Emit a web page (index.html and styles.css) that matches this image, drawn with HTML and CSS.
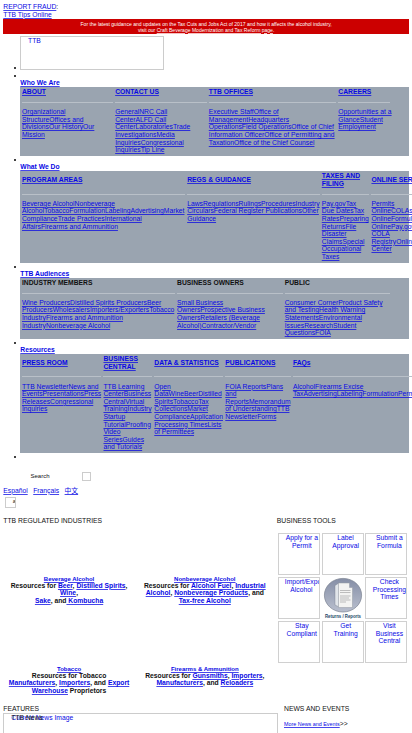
FILE: index.html
```html
<!DOCTYPE html>
<html lang="en">
<head>
<meta charset="utf-8">
<title>TTB</title>
<link rel="stylesheet" href="styles.css">
</head>
<body>
<header class="tips"><a href="#">REPORT FRAUD</a>:<br><a href="#">TTB Tips Online</a></header>
<div class="alert">For the latest guidance and updates on the Tax Cuts and Jobs Act of 2017 and how it affects the alcohol industry,<br>visit our <a href="#">Craft Beverage Modernization and Tax Reform page</a>.</div>
<ul class="nav">
  <li class="logo-item"><a class="logo" href="#">TTB</a></li>
  <li class="who"><a class="label" href="#">Who We Are</a>
    <div class="menu">
      <section><h2><a href="#">ABOUT</a></h2><p><a href="#">Organizational<br>StructureOffices and<br>DivisionsOur HistoryOur<br>Mission</a></p></section>
      <section><h2><a href="#">CONTACT US</a></h2><p><a href="#">GeneralNRC Call<br>CenterALFD Call<br>CenterLaboratoriesTrade<br>InvestigationsMedia<br>InquiriesCongressional<br>InquiriesTip Line</a></p></section>
      <section><h2><a href="#">TTB OFFICES</a></h2><p><a href="#">Executive StaffOffice of<br>ManagementHeadquarters<br>OperationsField OperationsOffice of Chief<br>Information OfficerOffice of Permitting and<br>TaxationOffice of the Chief Counsel</a></p></section>
      <section><h2><a href="#">CAREERS</a></h2><p><a href="#">Opportunities at a<br>GlanceStudent<br>Employment</a></p></section>
    </div></li>
  <li class="what"><a class="label" href="#">What We Do</a>
    <div class="menu tall">
      <section><h2><a href="#">PROGRAM AREAS</a></h2><p><a href="#">Beverage AlcoholNonbeverage<br>AlcoholTobaccoFormulationLabelingAdvertisingMarket<br>ComplianceTrade PracticesInternational<br>AffairsFirearms and Ammunition</a></p></section>
      <section><h2><a href="#">REGS &amp; GUIDANCE</a></h2><p><a href="#">LawsRegulationsRulingsProceduresIndustry<br>CircularsFederal Register PublicationsOther<br>Guidance</a></p></section>
      <section><h2><a href="#">TAXES AND<br>FILING</a></h2><p><a href="#">Pay.govTax<br>Due DatesTax<br>RatesPreparing<br>ReturnsFile<br>Disaster<br>ClaimsSpecial<br>Occupational<br>Taxes</a></p></section>
      <section><h2><a href="#">ONLINE SERVICES</a></h2><p><a href="#">Permits<br>OnlineCOLAs<br>OnlineFormulas<br>OnlinePay.gov<br>COLA<br>RegistryOnline<br>Center</a></p></section>
    </div></li>
  <li class="aud"><a class="label" href="#">TTB Audiences</a>
    <div class="menu">
      <section><h2>INDUSTRY MEMBERS</h2><p><a href="#">Wine ProducersDistilled Spirits ProducersBeer<br>ProducersWholesalersImporters/ExportersTobacco<br>IndustryFirearms and Ammunition<br>IndustryNonbeverage Alcohol</a></p></section>
      <section><h2>BUSINESS OWNERS</h2><p><a href="#">Small Business<br>OwnersProspective Business<br>OwnersRetailers (Beverage<br>Alcohol)Contractor/Vendor</a></p></section>
      <section><h2>PUBLIC</h2><p><a href="#">Consumer CornerProduct Safety<br>and TestingHealth Warning<br>StatementsEnvironmental<br>IssuesResearchStudent<br>QuestionsFOIA</a></p></section>
    </div></li>
  <li class="res"><a class="label" href="#">Resources</a>
    <div class="menu tall">
      <section><h2><a href="#">PRESS ROOM</a></h2><p><a href="#">TTB NewsletterNews and<br>EventsPresentationsPress<br>ReleasesCongressional<br>Inquiries</a></p></section>
      <section><h2><a href="#">BUSINESS<br>CENTRAL</a></h2><p><a href="#">TTB Learning<br>CenterBusiness<br>CentralVirtual<br>TrainingIndustry<br>Startup<br>TutorialProofing<br>Video<br>SeriesGuides<br>and Tutorials</a></p></section>
      <section><h2><a href="#">DATA &amp; STATISTICS</a></h2><p><a href="#">Open<br>DataWineBeerDistilled<br>SpiritsTobaccoTax<br>CollectionsMarket<br>ComplianceApplication<br>Processing TimesLists<br>of Permittees</a></p></section>
      <section><h2><a href="#">PUBLICATIONS</a></h2><p><a href="#">FOIA ReportsPlans<br>and<br>ReportsMemorandum<br>of UnderstandingTTB<br>NewsletterForms</a></p></section>
      <section><h2><a href="#">FAQs</a></h2><p><a href="#">AlcoholFirearms Excise<br>TaxAdvertisingLabelingFormulationPermits</a></p></section>
    </div></li>
  <li class="last"></li>
</ul>
<form class="search"><label>Search</label><span class="go"></span></form>
<div class="langs"><a href="#">Español</a><a href="#">Français</a><a href="#">中文</a></div>
<div class="tiny">a</div>
<main class="main">
  <section class="industries">
    <h3>TTB REGULATED INDUSTRIES</h3>
    <div class="grid">
      <div><a class="t" href="#">Beverage Alcohol</a><br>Resources for <a href="#">Beer</a>, <a href="#">Distilled Spirits</a>,<br><a href="#">Wine</a>,<br><a href="#">Sake</a>, and<a href="#"> Kombucha</a></div>
      <div><a class="t" href="#">Nonbeverage Alcohol</a><br>Resources for <a href="#">Alcohol Fuel</a>, <a href="#">Industrial<br>Alcohol</a>, <a href="#">Nonbeverage Products</a>, and<br><a href="#">Tax-free Alcohol</a></div>
      <div><a class="t" href="#">Tobacco</a><br>Resources for Tobacco<br><a href="#">Manufacturers</a>, <a href="#">Importers</a>, and <a href="#">Export<br>Warehouse</a> Proprietors</div>
      <div><a class="t" href="#">Firearms &amp; Ammunition</a><br>Resources for <a href="#">Gunsmiths</a>, <a href="#">Importers</a>,<br><a href="#">Manufacturers</a>, and <a href="#">Reloaders</a></div>
    </div>
  </section>
  <section class="tools">
    <h3>BUSINESS TOOLS</h3>
    <div class="tiles">
      <a href="#">Apply for a<br>Permit</a><a href="#">Label<br>Approval</a><a href="#">Submit a<br>Formula</a>
      <a class="wide" href="#">Import/Export<br><span>Alcohol</span></a>
      <a class="returns" href="#"><svg viewBox="0 0 42 42" width="42" height="42">
        <defs><linearGradient id="g" x1="0" y1="0" x2="0" y2="1"><stop offset="0" stop-color="#858ea6"/><stop offset="1" stop-color="#b9bfce"/></linearGradient></defs>
        <ellipse cx="21" cy="18.200" rx="18.600" ry="16.800" fill="url(#g)" stroke="#7b8291" stroke-width=".7"/>
        <path d="M13 8.500l4-2.500v24l-4-2z" fill="#e1e5ea" stroke="#737b88" stroke-width=".4"/>
        <path d="M16.500 6h11v4.500h3v20h-14z" fill="#f3f3f2" stroke="#9298a2" stroke-width=".5"/>
        <path d="M18 13.500h10.500M18 15.500h10.500M18 19h10.500M18 21h9M18 23h10.500M18 25h6" stroke="#999" stroke-width=".6"/>
        <text x="21" y="40.500" text-anchor="middle" textLength="36" lengthAdjust="spacingAndGlyphs">Returns / Reports</text></svg></a>
      <a href="#">Check<br>Processing<br>Times</a>
      <a href="#">Stay<br>Compliant</a><a href="#">Get<br>Training</a><a href="#">Visit<br>Business<br>Central</a>
    </div>
  </section>
</main>
<footer class="bottom">
  <section class="features"><h3>FEATURES</h3><div class="slide"><span>TTB News</span><a href="#">Current News Image</a></div></section>
  <section class="news"><h3>NEWS AND EVENTS</h3><p><a href="#">More News and Events</a>&gt;&gt;</p></section>
</footer>
</body>
</html>
```
FILE: styles.css
```css
* { box-sizing: border-box; }
html { overflow: hidden; height: 733px; }
body {
  margin: 0; padding: 3px 3.3px 0; width: 412px; height: 733px; overflow: hidden;
  background: #fff; color: #111;
  font: 6.76px/7.6px "Liberation Sans", "Noto Sans CJK SC", sans-serif;
}
a { color: #0808e4; text-decoration-color: rgba(8, 8, 228, .75); }
h2, h3, p { margin: 0; }
.tips { height: 16px; }
.alert {
  height: 15.3px; width: 405.7px; padding-top: 1.5px; background: #c00; color: #fff;
  font-size: 5.04px; line-height: 6px; text-align: center; white-space: nowrap;
}
.alert a { color: #fff; text-decoration-color: rgba(255, 255, 255, .75); }
.nav { list-style: none; margin: 2px 0 0; padding: 0 0 0 17px; width: 405.5px; }
.nav li { position: relative; }
.nav li::before {
  content: ""; position: absolute; left: -6px; top: 3px;
  width: 2px; height: 2px; border-radius: 50%; background: #000;
}
.nav .logo-item { height: 36px; }
.nav .logo-item::before { top: 31px; }
.logo {
  display: block; width: 143.5px; height: 33.5px; border: 1px solid #ccc;
  padding: 0 0 0 6.8px; text-decoration: none;
}
.label { display: block; font-weight: bold; padding-top: 7px; height: 15px; white-space: nowrap; }
.menu { display: grid; background: #9aa4b0; padding: 1px 0 0 1.7px; white-space: nowrap; }
.who .menu { height: 69px; grid-template-columns: 93.2px 93.6px 129.5px 54px; }
.what .menu { height: 91.5px; grid-template-columns: 165.2px 134.6px 49.7px 60px; }
.aud .menu { height: 61.3px; grid-template-columns: 155.1px 107.6px 107px; }
.res .menu { height: 98.7px; grid-template-columns: 81.5px 50.8px 71px 67.6px 130px; }
.menu h2 {
  display: flex; align-items: center; height: 7.6px; margin-bottom: 6.2px;
  font-size: inherit; font-weight: bold;
}
.menu.tall h2 { height: 15.2px; }
.menu p { position: relative; padding-top: 6.2px; }
.menu p::before { content: ""; position: absolute; top: 0; left: 0; right: 2px; height: 1px; background: #b9c0c8; }
.nav .last { height: 10px; }
.search { display: flex; align-items: center; height: 9px; margin: 9.5px 0 0 27.2px; font-size: 6px; }
.search label { width: 52px; }
.go { width: 9px; height: 9px; border: 1px solid #ccc; }
.langs { display: flex; gap: 5.5px; height: 10px; margin-top: 5.5px; }
.tiny {
  width: 11px; height: 11px; margin: 0 0 0 2px; border: 1px solid #ccc;
  padding-left: 6.5px; overflow: hidden; font-size: 6px;
}
.main { display: flex; height: 188px; margin-top: 9px; }
h3 { font-size: 6.8px; font-weight: normal; white-space: nowrap; }
.industries { width: 273.5px; flex: none; }
.grid {
  display: grid; grid-template-columns: 131.5px 140px; grid-template-rows: 90px 38px;
  margin-top: 49.6px; text-align: center; font-weight: bold; white-space: nowrap;
}
.grid .t { font-size: 6px; line-height: 6px; position: relative; top: .6px; }
.tiles { display: grid; grid-template-columns: repeat(3, 42px); grid-auto-rows: 42px; gap: 1.8px; margin: 9px 0 0 1px; }
.tiles a {
  border: 1px solid #d0d0d0; padding-left: 6px; overflow: hidden;
  text-align: center; text-decoration: none; white-space: nowrap;
}
.tiles .wide { text-align: left; }
.wide span { padding-left: 5.5px; }
.tiles .returns { border: 0; padding: 0; }
.returns svg { display: block; }
.returns text { font-size: 4.6px; font-weight: bold; fill: #1d4966; }
.bottom { display: flex; }
.features { width: 280.7px; flex: none; }
.slide { position: relative; width: 274.5px; height: 40px; border: 1px solid #ccc; padding-left: 7px; margin-top: .5px; }
.slide span { position: absolute; left: 7px; top: 0; }
.slide a { text-decoration: none; }
.news p { margin-top: 7.5px; }
.news p a { font-size: 5.4px; }
```
